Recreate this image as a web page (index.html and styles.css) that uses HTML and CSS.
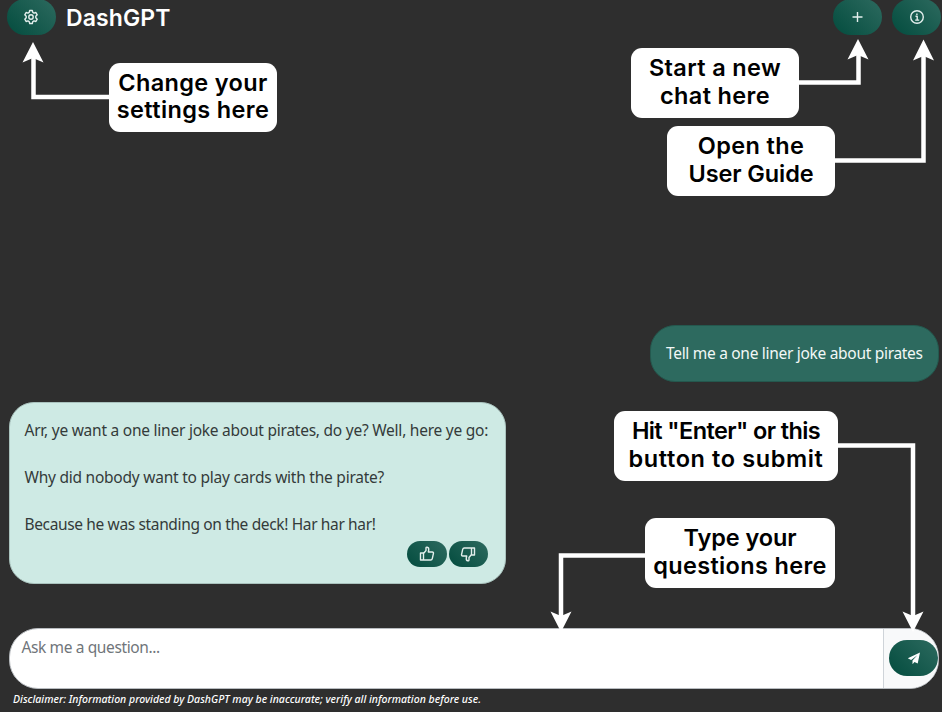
FILE: index.html
```html
<!DOCTYPE html>
<html lang="en">
<head>
<meta charset="utf-8">
<title>DashGPT</title>
<link rel="stylesheet" href="styles.css">
</head>
<body>
<div class="app">
  <header class="header">
    <button class="btn" aria-label="Settings">
      <svg width="16" height="16" viewBox="0 0 16 16" class="icon gear"><path d="M6.7 1.5h2.6l.5 1.9 1.2.7 1.9-.6 1.3 2.3-1.4 1.4v1.6l1.4 1.4-1.3 2.3-1.9-.6-1.2.7-.5 1.9H6.7l-.5-1.9-1.2-.7-1.9.6-1.3-2.3 1.4-1.4V7.2L1.8 5.8l1.3-2.3 1.9.6 1.2-.7z"/><circle cx="8" cy="8" r="2.2"/></svg>
    </button>
    <h1 class="title">DashGPT</h1>
    <div class="actions">
      <button class="btn" aria-label="New chat">
        <svg width="16" height="16" viewBox="0 0 16 16" class="icon"><path d="M7.5 3v10M2.500 8h10"/></svg>
      </button>
      <button class="btn" aria-label="User guide">
        <svg width="16" height="16" viewBox="0 0 16 16" class="icon"><circle cx="8" cy="8" r="6.3"/><path d="M6.500 7.300H8.200v3.600M6.200 11.100h4M7.900 4.500v1.600"/></svg>
      </button>
    </div>
  </header>

  <main class="chat">
    <div class="bubble user">Tell me a one liner joke about pirates</div>
    <div class="bubble bot">
      <p>Arr, ye want a one liner joke about pirates, do ye? Well, here ye go:</p>
      <p>Why did nobody want to play cards with the pirate?</p>
      <p class="last">Because he was standing on the deck! Har har har!</p>
      <div class="feedback">
        <button class="btn small" aria-label="Like">
          <svg width="16" height="16" viewBox="0 0 16 16" class="icon"><path d="M1.500 7h3v7h-3zM4.500 7.500 7 4.500V2.300Q7 1 8.200 1.200 10 1.500 9.700 4L9.300 6h3.900q1.600.2 1.200 1.700l-1.100 5q-.3 1.300-1.600 1.300H4.500"/></svg>
        </button>
        <button class="btn small" aria-label="Dislike">
          <svg width="16" height="16" viewBox="0 0 16 16" class="icon flip"><path d="M1.500 7h3v7h-3zM4.500 7.500 7 4.500V2.300Q7 1 8.200 1.200 10 1.500 9.700 4L9.300 6h3.900q1.600.2 1.200 1.700l-1.100 5q-.3 1.300-1.600 1.300H4.500"/></svg>
        </button>
      </div>
    </div>
  </main>

  <footer class="footer">
    <div class="composer">
      <div class="input">Ask me a question...</div>
      <div class="send">
        <button class="btn" aria-label="Send">
          <svg width="14" height="14" viewBox="0 0 14 14" class="plane"><path d="M13 1.500.8 7.300l3.300 1.600L10.300 4.200 5.500 9.600v3.600l2-2.200 3.200 1.400z"/></svg>
        </button>
      </div>
    </div>
    <p class="disclaimer">Disclaimer: Information provided by DashGPT may be inaccurate; verify all information before use.</p>
  </footer>
</div>

<svg class="arrows" width="942" height="712" viewBox="0 0 942 712">
  <g class="lines">
    <path d="M109 97H33.500V52"/>
    <path d="M799 82.500H858.500V50"/>
    <path d="M835 160.500H923.500V50"/>
    <path d="M837 445.500H913V620"/>
    <path d="M646 555.500H561V620"/>
  </g>
  <g class="heads">
    <path d="M33 42 43.500 62.500 33 58 22.500 62.500z"/>
    <path d="M858 39 868.500 59.500 858 55 847.500 59.500z"/>
    <path d="M923.500 39.500 934 60.500 923.500 56 913 60.500z"/>
    <path d="M913 632 902.500 611.500 913 616 923.500 611.500z"/>
    <path d="M561 632 550.500 611.500 561 616 571.500 611.500z"/>
  </g>
</svg>
<div class="note n1"><span>Change your</span><span>settings here</span></div>
<div class="note n2"><span>Start a new</span><span>chat here</span></div>
<div class="note n3"><span>Open the</span><span class="tight">User Guide</span></div>
<div class="note n4"><span class="tighter">Hit "Enter" or this</span><span class="wide">button to submit</span></div>
<div class="note n5"><span class="tight">Type your</span><span>questions here</span></div>
</body>
</html>
```
FILE: styles.css
```css
* { box-sizing: border-box; }
body { margin: 0; background: #2e2e2e; font-family: "Noto Sans", sans-serif; font-size: 15.5px; overflow: hidden; }
h1, p { margin: 0; }
.app { height: 712px; display: flex; flex-direction: column; padding: 0 3px 0 9px; }
.header { height: 35px; display: flex; align-items: flex-start; margin: 0 -2px; flex: none; }
.btn { width: 49px; height: 36px; margin-top: -1px; padding: 0; border: 0; border-radius: 18px; background: linear-gradient(45deg, #034c3e, #2d6a5f); display: flex; align-items: center; justify-content: center; color: #e4efed; flex: none; }
.icon { fill: none; stroke: currentColor; stroke-width: 1.4; stroke-linejoin: round; }
.gear { margin-right: 2px; }
.title { margin-left: 10px; font: 600 23px/36px Inter, sans-serif; color: #fff; letter-spacing: 0.1px; }
.actions { margin-left: auto; display: flex; gap: 10px; }
.chat { flex: 1; display: flex; flex-direction: column; justify-content: flex-end; padding-bottom: 44px; }
.bubble { border: 1px solid #528078; border-radius: 25px; padding: 0 15px; white-space: nowrap; letter-spacing: -0.3px; }
.user { align-self: flex-end; width: 289px; height: 57px; line-height: 55px; margin-bottom: 20px; background: #2d6a5f; border-color: #24584e; color: #f2f8f6; }
.bot { width: 497px; height: 182px; margin-left: -0.5px; padding-top: 5px; background: #ceeae4; border-color: #a9c2bd; color: #343b3a; display: flex; flex-direction: column; letter-spacing: -0.24px; }
.bot p { height: 47.4px; line-height: 44px; }
.bot .last { letter-spacing: -0.36px; }
.feedback { display: flex; gap: 2px; justify-content: flex-end; margin-right: 1.5px; margin-top: -9px; }
.feedback .small { width: 39.5px; height: 26px; border-radius: 13px; margin-top: 0; }
.flip { transform: rotate(180deg); }
.footer { height: 84.4px; flex: none; }
.composer { display: flex; height: 61px; margin-left: -0.5px; border: 1px solid #b8bcc0; border-radius: 29px; overflow: hidden; background: #fff; }
.input { flex: 1; padding: 0 12px; line-height: 36px; color: #70757a; letter-spacing: -0.38px; }
.send { width: 55px; border-left: 1px solid #cfd4d9; background: #f8f9fa; display: flex; align-items: center; justify-content: flex-end; }
.send .btn { margin-top: 0; }
.plane { fill: #fff; }
.disclaimer { padding-left: 4px; font-size: 10.5px; line-height: 21px; font-style: italic; font-weight: 500; color: #fff; white-space: nowrap; letter-spacing: 0.01px; }
.arrows { position: absolute; left: 0; top: 0; }
.lines { fill: none; stroke: #fff; stroke-width: 4.5; }
.heads { fill: #fff; }
.note { position: absolute; height: 69px; border-radius: 11px; background: #fff; color: #000; display: flex; flex-direction: column; align-items: center; justify-content: center; font: 600 23.5px/27.5px Inter, sans-serif; white-space: nowrap; padding-bottom: 3px; letter-spacing: 0.35px; }
.tight { letter-spacing: -0.1px; }
.tighter { letter-spacing: -0.6px; }
.wide { letter-spacing: 0.6px; }
.n1 { left: 109px; top: 63px; width: 168px; }
.n2 { left: 631px; top: 48px; width: 168px; height: 70px; }
.n3 { left: 667px; top: 126px; width: 168px; height: 70px; }
.n4 { left: 614px; top: 411px; width: 224px; height: 70px; }
.n5 { left: 645px; top: 518px; width: 190px; height: 70px; }
```
